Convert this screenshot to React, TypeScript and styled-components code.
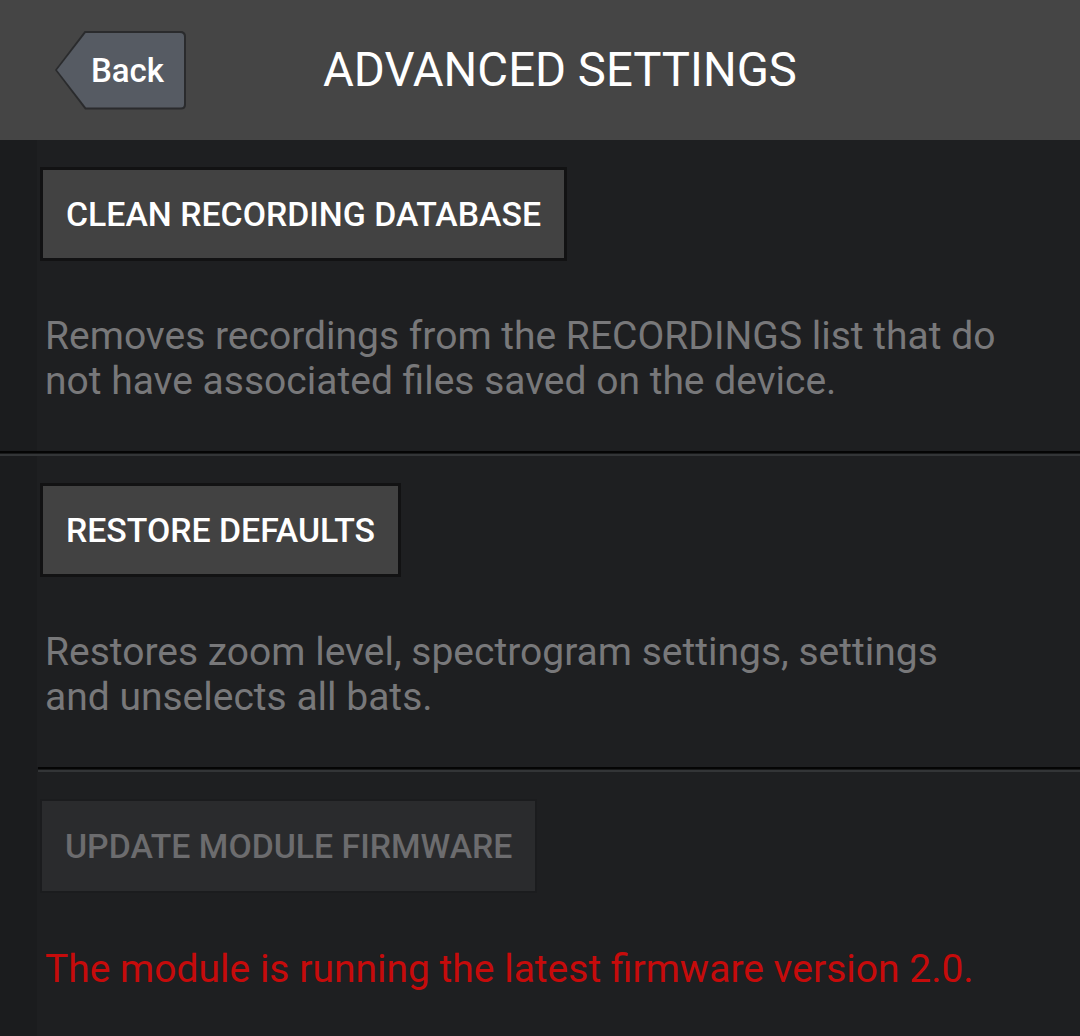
import React from "react";
import styled, { createGlobalStyle } from "styled-components";

const Global = createGlobalStyle`
  html, body { margin: 0; padding: 0; background: #1b1c1e; }
  body { font-family: Roboto, "Noto Sans", Arial, sans-serif; -webkit-font-smoothing: antialiased; }
  * { box-sizing: border-box; }
`;

const Page = styled.div`
  width: 1080px;
  min-height: 1036px;
  background: #1b1c1e;
  display: flex;
  flex-direction: column;
`;

const Header = styled.header`
  height: 140px;
  background: #454545;
  display: flex;
  align-items: center;
  padding-left: 55px;
`;

const BackOuter = styled.button`
  width: 131px;
  height: 79px;
  padding: 2px;
  border: none;
  background: #2a2b2d;
  border-radius: 0 5px 5px 0;
  clip-path: polygon(30px 0, 100% 0, 100% 100%, 30px 100%, 0 50%);
  display: flex;
  cursor: pointer;
`;

const BackInner = styled.span`
  flex: 1;
  background: #565b63;
  border-radius: 0 4px 4px 0;
  clip-path: polygon(29px 0, 100% 0, 100% 100%, 29px 100%, 0 50%);
  display: flex;
  align-items: center;
  padding-left: 34px;
  color: #ffffff;
  font-family: Roboto, sans-serif;
  font-weight: 500;
  font-size: 33px;
`;

const Title = styled.h1`
  margin: 0 0 0 137px;
  font-family: Roboto, sans-serif;
  font-weight: 400;
  font-size: 47.3px;
  color: #ffffff;
`;

const Section = styled.section`
  margin-left: 37px;
  background: #1e1f21;
  padding: 27px 0 47px 3px;
  display: flex;
  flex-direction: column;
  align-items: flex-start;
`;

const Divider = styled.div<{ $full?: boolean }>`
  margin-left: ${(p) => (p.$full ? "0" : "38px")};
  height: 5px;
  background: linear-gradient(
    to bottom,
    #050505 0,
    #050505 2px,
    #18191a 2px,
    #18191a 3px,
    #333537 3px,
    #333537 5px
  );
`;

const ActionButton = styled.button<{ $disabled?: boolean }>`
  height: 94px;
  padding: 0 ${(p) => (p.$disabled ? "23px" : "23px")};
  border: ${(p) => (p.$disabled ? "2px solid #1b1c1e" : "3px solid #121213")};
  background: ${(p) => (p.$disabled ? "#2a2b2d" : "#424242")};
  color: ${(p) => (p.$disabled ? "#6c6c6e" : "#ffffff")};
  font-family: Roboto, sans-serif;
  font-weight: 500;
  font-size: 33.8px;
  text-transform: uppercase;
  cursor: pointer;
`;

const Description = styled.p<{ $error?: boolean }>`
  margin: ${(p) => (p.$error ? "54px" : "53px")} 0 0 5px;
  font-family: Roboto, sans-serif;
  font-weight: 400;
  font-size: 39px;
  line-height: 45px;
  color: ${(p) => (p.$error ? "#c60b0b" : "#78787a")};
`;

export default function App() {
  return (
    <Page>
      <Global />
      <Header>
        <BackOuter>
          <BackInner>Back</BackInner>
        </BackOuter>
        <Title>ADVANCED SETTINGS</Title>
      </Header>
      <Section>
        <ActionButton>Clean Recording Database</ActionButton>
        <Description>
          Removes recordings from the RECORDINGS list that do
          <br />
          not have associated files saved on the device.
        </Description>
      </Section>
      <Divider $full />
      <Section>
        <ActionButton>Restore Defaults</ActionButton>
        <Description>
          Restores zoom level, spectrogram settings, settings
          <br />
          and unselects all bats.
        </Description>
      </Section>
      <Divider />
      <Section>
        <ActionButton $disabled>Update Module Firmware</ActionButton>
        <Description $error>
          The module is running the latest firmware version 2.0.
        </Description>
      </Section>
    </Page>
  );
}
